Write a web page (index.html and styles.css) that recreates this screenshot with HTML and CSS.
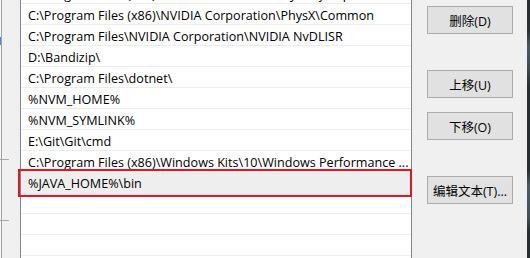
FILE: index.html
```html
<!DOCTYPE html>
<html lang="zh-CN">
<head>
  <meta charset="UTF-8" />
  <title>编辑环境变量</title>
  <link rel="stylesheet" href="styles.css">
</head>
<body>
  <div class="dialog">
    <div class="edge"><span class="edge-mark"></span></div>
    <div class="gutter">
      <span class="gutter-line line-a"></span>
      <span class="gutter-line line-b"></span>
    </div>

    <div class="path-list">
      <div class="rows">
        <div class="row">C:\Program Files (x86)\Common Files\Oracle\Java\javapath</div>
        <div class="row">C:\Program Files (x86)\NVIDIA Corporation\PhysX\Common</div>
        <div class="row">C:\Program Files\NVIDIA Corporation\NVIDIA NvDLISR</div>
        <div class="row">D:\Bandizip\</div>
        <div class="row">C:\Program Files\dotnet\</div>
        <div class="row">%NVM_HOME%</div>
        <div class="row">%NVM_SYMLINK%</div>
        <div class="row">E:\Git\Git\cmd</div>
        <div class="row">C:\Program Files (x86)\Windows Kits\10\Windows Performance ...</div>
        <div class="row selected">%JAVA_HOME%\bin</div>
        <div class="row"></div>
        <div class="row"></div>
        <div class="row"></div>
      </div>
    </div>

    <div class="actions">
      <button class="btn btn-delete">删除(D)</button>
      <button class="btn btn-up">上移(U)</button>
      <button class="btn btn-down">下移(O)</button>
      <button class="btn btn-edit">编辑文本(T)...</button>
    </div>

    <div class="desktop"></div>
  </div>
</body>
</html>
```

FILE: styles.css
```css
html, body { margin: 0; padding: 0; }
body { width: 530px; height: 258px; overflow: hidden; background: #f0f0f0; font-family: "Open Sans", "Noto Sans CJK SC", sans-serif; font-size: 12px; color: #000; }

.dialog { display: flex; height: 258px; }

/* bord gauche de la fenêtre */
.edge { width: 1px; border-right: 1px solid #a0a0a0; background: #f7f7f7; position: relative; }
.edge-mark { position: absolute; left: 0; top: 37px; width: 1px; height: 8px; background: #3c8ee0; }

.gutter { width: 18px; position: relative; }
.gutter-line { position: absolute; left: -2px; width: 9px; height: 1px; background: #a8a8a8; }
.line-a { top: 159px; }
.line-b { top: 220px; }

.path-list { width: 390px; background: #fff; border-left: 1px solid #828790; border-right: 1px solid #828790; }
.rows { margin-top: -17px; }
.row { height: 20px; line-height: 24px; padding-left: 7px; border-bottom: 1px solid #ececec; font-size: 12.6px; white-space: nowrap; position: relative; }

.row.selected { background: #eeeeee; border-bottom-color: #eeeeee; box-shadow: 0 3px 0 #eeeeee; }
.row.selected::after { content: ""; position: absolute; top: -3px; bottom: -5px; left: -3px; right: -1px; border: 2px solid #e8141f; }

.actions { display: flex; flex-direction: column; width: 86px; margin-left: 15px; }
.btn { width: 86px; height: 28px; padding: 0; background: #e1e1e1; border: 1px solid #adadad; font-family: "Open Sans", "Noto Sans CJK SC", sans-serif; font-size: 12.5px; color: #000; }
.btn-delete { margin-top: 6px; }
.btn-up { margin-top: 36px; }
.btn-down { margin-top: 14px; }
.btn-edit { margin-top: 36px; }

.desktop { width: 3px; margin-left: 14px; background: linear-gradient(#262d33 0, #2b3036 12%, #4a5966 18%, #3f4c57 26%, #262d33 34%, #262d33 66%, #4b5a66 72%, #43505b 84%, #262d33 90%); }
```
